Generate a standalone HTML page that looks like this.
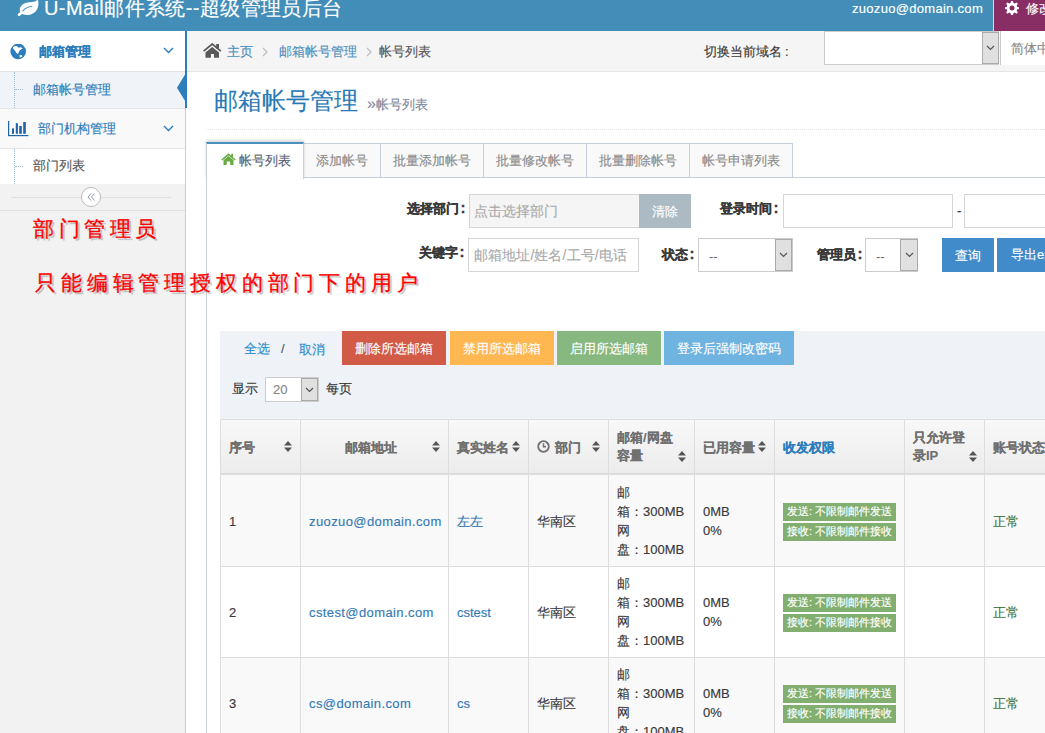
<!DOCTYPE html>
<html><head><meta charset="utf-8">
<style>
*{box-sizing:border-box}
html,body{margin:0;padding:0}
body{width:1045px;height:733px;overflow:hidden;position:relative;background:#fff;font-family:"Liberation Sans",sans-serif;font-size:13px;color:#393939;-webkit-text-stroke:0.15px currentColor}
.a{position:absolute;white-space:nowrap}
.b{-webkit-text-stroke:0.25px currentColor}
/* header */
#hdr{left:0;top:0;width:1045px;height:31px;background:#438eb9}
#brand{left:44px;top:-4px;font-size:20px;color:#fff;line-height:24px;letter-spacing:0.4px}
#user{left:852px;top:0px;color:#fff;line-height:18px;letter-spacing:0.3px}
#purple{left:993px;top:0;width:52px;height:31px;background:#892e65;border-left:1px solid #dcdcdc}
/* sidebar */
#sb{left:0;top:31px;width:186px;height:702px;background:#f2f2f2;border-right:1px solid #ccc}
.row{left:0;width:185px;border-top:1px solid #e5e5e5}
.chev{width:10px;height:6px}
</style></head><body>

<div id="hdr" class="a"></div>
<svg class="a" style="left:14px;top:0" width="30" height="20" viewBox="0 0 30 20"><path d="M6.5 13.5 C5.2 11 5.5 8 7.5 5.5 C10 2.8 14 2.2 18 2 C20.5 1.9 22.5 1 23.8 -0.5 C24.8 2 24.6 6 23.2 9 C21.2 13 17 15 13 15 C10.5 15 8.5 14.3 7 13.6 Z" fill="#fff"/><path d="M7.2 13 L5 14.8" stroke="#fff" stroke-width="2.6" stroke-linecap="round"/><path d="M8.8 11 Q12 7.2 17.8 6.3" fill="none" stroke="#438eb9" stroke-width="1.1" stroke-linecap="round"/></svg>
<div id="brand" class="a">U-Mail邮件系统--超级管理员后台</div>
<div id="user" class="a">zuozuo@domain.com</div>
<div id="purple" class="a"></div>
<svg class="a" style="left:1005px;top:1px" width="14" height="14" viewBox="0 0 14 14"><path fill="#fff" fill-rule="evenodd" d="M6 0 H8 L8.4 2 L9.8 2.6 L11.5 1.4 L12.9 2.8 L11.7 4.5 L12.3 5.9 L14 6.2 V8 L12.3 8.3 L11.7 9.7 L12.9 11.4 L11.5 12.8 L9.8 11.6 L8.4 12.2 L8 14 H6 L5.6 12.2 L4.2 11.6 L2.5 12.8 L1.1 11.4 L2.3 9.7 L1.7 8.3 L0 8 V6.2 L1.7 5.9 L2.3 4.5 L1.1 2.8 L2.5 1.4 L4.2 2.6 L5.6 2 Z M7 4.6 A2.5 2.5 0 1 0 7 9.6 A2.5 2.5 0 1 0 7 4.6 Z"/></svg>
<div class="a" style="left:1026px;top:0px;color:#fff;line-height:18px">修改密码</div>

<div id="sb" class="a"></div>
<!-- item1 -->
<div class="a" style="left:0;top:31px;width:185px;height:40px;background:#fff"></div>
<svg class="a" style="left:10px;top:44px" width="18" height="18" viewBox="0 0 18 18"><circle cx="8.2" cy="7.4" r="7.8" fill="#2b7dbc"/><path d="M3.05 2.9 L5 2 L7.4 2.15 L7.7 3.2 L9.2 3.8 L10.4 3 L12.8 4.4 L11 5.6 L9.8 6.2 L8.9 8 L8 10.1 L6.5 8.9 L5 6.8 L3.2 4.7 Z M9.2 11.6 L11.6 11 L12.5 12.2 L10.1 13.7 Z" fill="#fff"/></svg>
<div class="a" style="left:39px;top:43px;line-height:18px;font-weight:bold;color:#2b7dbc">邮箱管理</div>
<svg class="a" style="left:163px;top:47px" width="11" height="7" viewBox="0 0 11 7"><path d="M1 1 L5.5 5.5 L10 1" fill="none" stroke="#2b7dbc" stroke-width="1.35"/></svg>
<!-- sub1 -->
<div class="a" style="left:0;top:71px;width:185px;height:37px;background:#f0f4f8;border-top:1px solid #e5e5e5"></div>
<div class="a" style="left:14px;top:72px;width:0;height:36px;border-left:1px dotted #9dbdd6"></div>
<div class="a" style="left:15px;top:89px;width:8px;height:0;border-top:1px dotted #9dbdd6"></div>
<div class="a" style="left:33px;top:81px;line-height:18px;color:#2b7dbc">邮箱帐号管理</div>
<div class="a" style="left:185px;top:31px;width:2px;height:77px;background:#2b7dbc"></div>
<svg class="a" style="left:176px;top:73px" width="10" height="30" viewBox="0 0 10 30"><path d="M10 0 L10 29.5 L1 14.75 Z" fill="#2b7dbc"/></svg>
<!-- item2 -->
<div class="a" style="left:0;top:108px;width:185px;height:40px;background:#f9f9f9;border-top:1px solid #e5e5e5"></div>
<svg class="a" style="left:4px;top:116px" width="30" height="24" viewBox="0 0 30 24"><rect x="4" y="5" width="1.2" height="15" fill="#1e63ab"/><rect x="4" y="19" width="20.5" height="1.2" fill="#1e63ab"/><rect x="8" y="12.4" width="2" height="5.4" fill="#1e63ab"/><rect x="11.8" y="7.2" width="2.1" height="10.6" fill="#1e63ab"/><rect x="15.2" y="10" width="2.6" height="7.8" fill="#1e63ab"/><rect x="19.2" y="6" width="2.6" height="11.8" fill="#1e63ab"/></svg>
<div class="a" style="left:38px;top:120px;line-height:18px;color:#2b7dbc">部门机构管理</div>
<svg class="a" style="left:163px;top:125px" width="11" height="7" viewBox="0 0 11 7"><path d="M1 1 L5.5 5.5 L10 1" fill="none" stroke="#2b7dbc" stroke-width="1.35"/></svg>
<!-- sub2 -->
<div class="a" style="left:0;top:148px;width:185px;height:36px;background:#fff;border-top:1px solid #e5e5e5"></div>
<div class="a" style="left:14px;top:149px;width:0;height:35px;border-left:1px dotted #9dbdd6"></div>
<div class="a" style="left:15px;top:166px;width:8px;height:0;border-top:1px dotted #9dbdd6"></div>
<div class="a" style="left:33px;top:157px;line-height:18px;color:#585858">部门列表</div>
<!-- collapse -->
<div class="a" style="left:0;top:184px;width:185px;height:27px;background:#f2f2f2;border-bottom:1px solid #e0e0e0"></div>
<div class="a" style="left:11px;top:197px;width:160px;height:0;border-top:1px solid #e0e0e0"></div>
<div class="a" style="left:81px;top:187px;width:20px;height:20px;border-radius:50%;background:#fff;border:1px solid #bbb"></div><svg class="a" style="left:86px;top:192px" width="10" height="10" viewBox="0 0 10 10"><path d="M5 1.5 L2 5 L5 8.5 M8.5 1.5 L5.5 5 L8.5 8.5" fill="none" stroke="#8c9db0" stroke-width="1"/></svg>
<!-- annotation -->
<div class="a" style="left:33px;top:215px;font-size:21px;line-height:28px;color:#f00;letter-spacing:4.6px;font-weight:normal;-webkit-text-stroke:0.3px #f00;text-shadow:2px 2px 1px rgba(0,0,0,.25)">部门管理员</div>
<div class="a" style="left:35px;top:269px;font-size:21px;line-height:28px;color:#f00;letter-spacing:4.85px;font-weight:normal;-webkit-text-stroke:0.3px #f00;text-shadow:2px 2px 1px rgba(0,0,0,.25);z-index:5">只能编辑管理授权的部门下的用户</div>

<!-- breadcrumbs -->
<div class="a" style="left:187px;top:31px;width:858px;height:41px;background:#f5f5f5;border-bottom:1px solid #e5e5e5"></div>
<svg class="a" style="left:203px;top:43px" width="19" height="16" viewBox="0 0 19 16"><path d="M0.6 8.2 L9.2 1 L17.9 8.2" fill="none" stroke="#585858" stroke-width="1.7"/><path d="M2.5 9.6 L9.2 4 L16 9.6 V14.8 H11 V11 H7.9 V14.8 H2.5 Z" fill="#585858"/><rect x="13.2" y="1" width="2.8" height="4.4" fill="#585858"/></svg>
<div class="a" style="left:227px;top:43px;line-height:18px;color:#4c8fbd">主页</div>
<svg class="a" style="left:262px;top:47px" width="6" height="10" viewBox="0 0 6 10"><path d="M1 1 L5 5 L1 9" fill="none" stroke="#bbb" stroke-width="1.2"/></svg>
<div class="a" style="left:279px;top:43px;line-height:18px;color:#4c8fbd">邮箱帐号管理</div>
<svg class="a" style="left:366px;top:47px" width="6" height="10" viewBox="0 0 6 10"><path d="M1 1 L5 5 L1 9" fill="none" stroke="#bbb" stroke-width="1.2"/></svg>
<div class="a" style="left:379px;top:43px;line-height:18px;color:#555">帐号列表</div>
<div class="a" style="left:704px;top:43px;line-height:18px;color:#393939">切换当前域名<span style="padding-left:3px">:</span></div>
<div class="a" style="left:824px;top:31px;width:175px;height:34px;background:#fff;border:1px solid #ccc"></div>
<div class="a" style="left:982px;top:32px;width:17px;height:32px;background:#e0e0e0;border:1px solid #aaa"></div>
<svg class="a" style="left:986px;top:45px" width="9" height="6" viewBox="0 0 9 6"><path d="M1 1 L4.5 4.5 L8 1" fill="none" stroke="#555" stroke-width="1.2"/></svg>
<div class="a" style="left:1000px;top:31px;width:45px;height:34px;background:#fff;border-left:1px solid #ccc"></div>
<div class="a" style="left:1011px;top:40px;line-height:18px;color:#888;font-size:13px">简体中文</div>
<!-- page header -->
<div class="a" style="left:214px;top:86px;font-size:24px;line-height:30px;color:#2679b5">邮箱帐号管理</div>
<div class="a" style="left:367px;top:96px;font-size:13px;line-height:18px;color:#8089a0"><span style="font-size:16px;line-height:14px">&raquo;</span>帐号列表</div>
<div class="a" style="left:206px;top:129px;width:839px;height:0;border-top:1px dotted #e2e2e2"></div>
<!-- tabs -->
<div class="a" style="left:206px;top:177px;width:839px;height:556px;border-left:1px solid #c5d0dc;border-top:1px solid #c5d0dc"></div>
<div class="a" style="left:303px;top:143px;width:78px;height:35px;background:#f9f9f9;border:1px solid #c5d0dc"></div>
<div class="a" style="left:380px;top:143px;width:104px;height:35px;background:#f9f9f9;border:1px solid #c5d0dc"></div>
<div class="a" style="left:483px;top:143px;width:104px;height:35px;background:#f9f9f9;border:1px solid #c5d0dc"></div>
<div class="a" style="left:586px;top:143px;width:104px;height:35px;background:#f9f9f9;border:1px solid #c5d0dc"></div>
<div class="a" style="left:689px;top:143px;width:104px;height:35px;background:#f9f9f9;border:1px solid #c5d0dc"></div>
<div class="a" style="left:206px;top:142px;width:98px;height:37px;background:#fff;border-left:1px solid #c5d0dc;border-right:1px solid #c5d0dc;border-top:2px solid #4c8fbd;box-shadow:0 -2px 3px 0 rgba(0,0,0,.15)"></div>
<div class="a" style="left:207px;top:177px;width:96px;height:3px;background:#fff"></div>
<svg class="a" style="left:221px;top:153px" width="15" height="12" viewBox="0 0 15 12"><path d="M7.5 0.3 L0.3 6.5 L1.4 7.6 L7.5 2.4 L13.6 7.6 L14.7 6.5 L12 4.2 V0.8 H10.3 V2.7 Z" fill="#69aa46"/><path d="M2.5 7.2 L7.5 3.1 L12.5 7.2 V12 H9.2 V8.5 H5.8 V12 H2.5 Z" fill="#69aa46"/></svg>
<div class="a" style="left:239px;top:152px;line-height:18px;color:#576373">帐号列表</div>
<div class="a" style="left:316px;top:152px;line-height:18px;color:#8c8c8c">添加帐号</div>
<div class="a" style="left:393px;top:152px;line-height:18px;color:#8c8c8c">批量添加帐号</div>
<div class="a" style="left:496px;top:152px;line-height:18px;color:#8c8c8c">批量修改帐号</div>
<div class="a" style="left:599px;top:152px;line-height:18px;color:#8c8c8c">批量删除帐号</div>
<div class="a" style="left:702px;top:152px;line-height:18px;color:#8c8c8c">帐号申请列表</div>
<!-- form -->
<div class="a" style="left:407px;top:200px;line-height:18px;font-weight:bold;color:#393939;-webkit-text-stroke:0.3px #393939">选择部门<span style="padding:0 0 0 1.5px;font-size:15px;line-height:10px">:</span></div>
<div class="a" style="left:469px;top:194px;width:171px;height:34px;background:#f5f5f5;border:1px solid #d5d5d5"></div>
<div class="a" style="left:474px;top:202px;line-height:18px;color:#aaa;font-size:14px">点击选择部门</div>
<div class="a" style="left:639px;top:194px;width:52px;height:34px;background:#abbac3;color:#fff;text-align:center;line-height:36px">清除</div>
<div class="a" style="left:720px;top:200px;line-height:18px;font-weight:bold;color:#393939;-webkit-text-stroke:0.3px #393939">登录时间<span style="padding:0 0 0 1.5px;font-size:15px;line-height:10px">:</span></div>
<div class="a" style="left:783px;top:194px;width:170px;height:34px;background:#fff;border:1px solid #d5d5d5"></div>
<div class="a" style="left:957px;top:202px;line-height:18px;color:#393939">-</div>
<div class="a" style="left:964px;top:194px;width:100px;height:34px;background:#fff;border:1px solid #d5d5d5"></div>
<div class="a" style="left:419px;top:244px;line-height:18px;font-weight:bold;color:#393939;-webkit-text-stroke:0.3px #393939">关键字<span style="padding:0 0 0 1.5px;font-size:15px;line-height:10px">:</span></div>
<div class="a" style="left:468px;top:238px;width:171px;height:34px;background:#fff;border:1px solid #d5d5d5"></div>
<div class="a" style="left:474px;top:246px;line-height:18px;color:#aaa;font-size:14px;letter-spacing:0.1px">邮箱地址/姓名/工号/电话</div>
<div class="a" style="left:662px;top:246px;line-height:18px;font-weight:bold;color:#393939;-webkit-text-stroke:0.3px #393939">状态<span style="padding:0 0 0 1.5px;font-size:15px;line-height:10px">:</span></div>
<div class="a" style="left:698px;top:238px;width:95px;height:34px;background:#fff;border:1px solid #ccc"></div>
<div class="a" style="left:775px;top:239px;width:17px;height:32px;background:#e0e0e0;border:1px solid #aaa"></div>
<svg class="a" style="left:779px;top:252px" width="9" height="6" viewBox="0 0 9 6"><path d="M1 1 L4.5 4.5 L8 1" fill="none" stroke="#555" stroke-width="1.2"/></svg>
<div class="a" style="left:709px;top:248px;line-height:18px;color:#666;-webkit-text-stroke:0">--</div>
<div class="a" style="left:817px;top:246px;line-height:18px;font-weight:bold;color:#393939;-webkit-text-stroke:0.3px #393939">管理员<span style="padding:0 0 0 1.5px;font-size:15px;line-height:10px">:</span></div>
<div class="a" style="left:865px;top:238px;width:53px;height:34px;background:#fff;border:1px solid #ccc"></div>
<div class="a" style="left:900px;top:239px;width:18px;height:32px;background:#e0e0e0;border:1px solid #aaa"></div>
<svg class="a" style="left:905px;top:252px" width="9" height="6" viewBox="0 0 9 6"><path d="M1 1 L4.5 4.5 L8 1" fill="none" stroke="#555" stroke-width="1.2"/></svg>
<div class="a" style="left:876px;top:248px;line-height:18px;color:#666;-webkit-text-stroke:0">--</div>
<div class="a" style="left:942px;top:238px;width:52px;height:34px;background:#428bca;color:#fff;text-align:center;line-height:36px">查询</div>
<div class="a" style="left:997px;top:238px;width:80px;height:34px;background:#428bca;color:#fff;line-height:34px;padding-left:14px">导出excel</div>
<!-- batch -->
<div class="a" style="left:220px;top:331px;width:825px;height:88px;background:#eff3f8"></div>
<div class="a" style="left:244px;top:340px;line-height:18px;color:#2a8bcc">全选</div>
<div class="a" style="left:281px;top:340px;line-height:18px;color:#555">/</div>
<div class="a" style="left:299px;top:341px;line-height:18px;color:#2a8bcc">取消</div>
<div class="a" style="left:342px;top:331px;width:104px;height:34px;background:#d15b47;color:#fff;text-align:center;line-height:36px">删除所选邮箱</div>
<div class="a" style="left:450px;top:331px;width:104px;height:34px;background:#ffb752;color:#fff;text-align:center;line-height:36px">禁用所选邮箱</div>
<div class="a" style="left:557px;top:331px;width:104px;height:34px;background:#87b87f;color:#fff;text-align:center;line-height:36px">启用所选邮箱</div>
<div class="a" style="left:664px;top:331px;width:130px;height:34px;background:#6fb3e0;color:#fff;text-align:center;line-height:36px">登录后强制改密码</div>
<div class="a" style="left:232px;top:380px;line-height:18px;color:#393939">显示</div>
<div class="a" style="left:265px;top:377px;width:54px;height:25px;background:#fff;border:1px solid #ccc"></div>
<div class="a" style="left:301px;top:378px;width:17px;height:23px;background:#e0e0e0;border:1px solid #aaa"></div>
<svg class="a" style="left:305px;top:387px" width="9" height="6" viewBox="0 0 9 6"><path d="M1 1 L4.5 4.5 L8 1" fill="none" stroke="#555" stroke-width="1.2"/></svg>
<div class="a" style="left:273px;top:381px;line-height:18px;color:#888">20</div>
<div class="a" style="left:326px;top:380px;line-height:18px;color:#393939">每页</div>

<!-- table -->
<div class="a" style="left:220px;top:419px;width:825px;height:56px;background:linear-gradient(#f8f8f8,#ececec);border-top:1px solid #ddd;border-bottom:2px solid #ddd"></div>
<div class="a" style="left:220px;top:475px;width:825px;height:91px;background:#f9f9f9"></div>
<div class="a" style="left:220px;top:566px;width:825px;height:1px;background:#ddd"></div>
<div class="a" style="left:220px;top:567px;width:825px;height:90px;background:#fff"></div>
<div class="a" style="left:220px;top:657px;width:825px;height:1px;background:#ddd"></div>
<div class="a" style="left:220px;top:658px;width:825px;height:75px;background:#f9f9f9"></div>
<div class="a" style="left:220px;top:419px;width:1px;height:314px;background:#ddd"></div>
<div class="a" style="left:300px;top:419px;width:1px;height:314px;background:#ddd"></div>
<div class="a" style="left:448px;top:419px;width:1px;height:314px;background:#ddd"></div>
<div class="a" style="left:528px;top:419px;width:1px;height:314px;background:#ddd"></div>
<div class="a" style="left:608px;top:419px;width:1px;height:314px;background:#ddd"></div>
<div class="a" style="left:694px;top:419px;width:1px;height:314px;background:#ddd"></div>
<div class="a" style="left:774px;top:419px;width:1px;height:314px;background:#ddd"></div>
<div class="a" style="left:904px;top:419px;width:1px;height:314px;background:#ddd"></div>
<div class="a" style="left:984px;top:419px;width:1px;height:314px;background:#ddd"></div>
<div class="a" style="left:229px;top:438px;line-height:19px;font-weight:bold;color:#707070">序号</div>
<svg class="a" style="left:284px;top:441px" width="8" height="11" viewBox="0 0 8 11"><path d="M4 0 L8 4.6 H0 Z M0 6.4 H8 L4 11 Z" fill="#555"/></svg>
<div class="a" style="left:345px;top:438px;line-height:19px;font-weight:bold;color:#707070">邮箱地址</div>
<svg class="a" style="left:432px;top:441px" width="8" height="11" viewBox="0 0 8 11"><path d="M4 0 L8 4.6 H0 Z M0 6.4 H8 L4 11 Z" fill="#555"/></svg>
<div class="a" style="left:457px;top:438px;line-height:19px;font-weight:bold;color:#707070">真实姓名</div>
<svg class="a" style="left:512px;top:441px" width="8" height="11" viewBox="0 0 8 11"><path d="M4 0 L8 4.6 H0 Z M0 6.4 H8 L4 11 Z" fill="#555"/></svg>
<svg class="a" style="left:537px;top:440px" width="13" height="13" viewBox="0 0 13 13"><circle cx="6.5" cy="6.5" r="5.3" fill="none" stroke="#707070" stroke-width="1.8"/><path d="M6.5 3.2 V6.8 H9" fill="none" stroke="#707070" stroke-width="1.5"/></svg>
<div class="a" style="left:555px;top:438px;line-height:19px;font-weight:bold;color:#707070">部门</div>
<svg class="a" style="left:592px;top:441px" width="8" height="11" viewBox="0 0 8 11"><path d="M4 0 L8 4.6 H0 Z M0 6.4 H8 L4 11 Z" fill="#555"/></svg>
<div class="a" style="left:617px;top:429px;line-height:18px;font-weight:bold;color:#707070">邮箱/网盘<br>容量</div>
<svg class="a" style="left:678px;top:451px" width="8" height="11" viewBox="0 0 8 11"><path d="M4 0 L8 4.6 H0 Z M0 6.4 H8 L4 11 Z" fill="#555"/></svg>
<div class="a" style="left:703px;top:438px;line-height:19px;font-weight:bold;color:#707070">已用容量</div>
<svg class="a" style="left:758px;top:441px" width="8" height="11" viewBox="0 0 8 11"><path d="M4 0 L8 4.6 H0 Z M0 6.4 H8 L4 11 Z" fill="#555"/></svg>
<div class="a" style="left:783px;top:438px;line-height:19px;font-weight:bold;color:#2b7dbc">收发权限</div>
<div class="a" style="left:913px;top:429px;line-height:18px;font-weight:bold;color:#707070">只允许登<br>录IP</div>
<svg class="a" style="left:969px;top:451px" width="8" height="11" viewBox="0 0 8 11"><path d="M4 0 L8 4.6 H0 Z M0 6.4 H8 L4 11 Z" fill="#555"/></svg>
<div class="a" style="left:993px;top:438px;line-height:19px;font-weight:bold;color:#707070">账号状态</div>
<div class="a" style="left:229px;top:512px;line-height:19px;color:#393939">1</div>
<div class="a" style="left:309px;top:512px;line-height:19px;color:#337ab7;letter-spacing:0.4px">zuozuo@domain.com</div>
<div class="a" style="left:457px;top:512px;line-height:19px;color:#337ab7">左左</div>
<div class="a" style="left:537px;top:512px;line-height:19px;color:#393939">华南区</div>
<div class="a" style="left:617px;top:483px;line-height:19px;color:#393939">邮<br>箱：300MB<br>网<br>盘：100MB</div>
<div class="a" style="left:703px;top:502px;line-height:19px;color:#393939">0MB<br>0%</div>
<div class="a" style="left:783px;top:503px;width:113px;height:18px;background:#82af6f;color:#fff;font-size:11px;line-height:16px;padding-left:4px">发送: 不限制邮件发送</div>
<div class="a" style="left:783px;top:523px;width:113px;height:18px;background:#82af6f;color:#fff;font-size:11px;line-height:16px;padding-left:4px">接收: 不限制邮件接收</div>
<div class="a" style="left:993px;top:512px;line-height:19px;color:#3c763d">正常</div>
<div class="a" style="left:229px;top:603px;line-height:19px;color:#393939">2</div>
<div class="a" style="left:309px;top:603px;line-height:19px;color:#337ab7;letter-spacing:0.4px">cstest@domain.com</div>
<div class="a" style="left:457px;top:603px;line-height:19px;color:#337ab7">cstest</div>
<div class="a" style="left:537px;top:603px;line-height:19px;color:#393939">华南区</div>
<div class="a" style="left:617px;top:574px;line-height:19px;color:#393939">邮<br>箱：300MB<br>网<br>盘：100MB</div>
<div class="a" style="left:703px;top:593px;line-height:19px;color:#393939">0MB<br>0%</div>
<div class="a" style="left:783px;top:594px;width:113px;height:18px;background:#82af6f;color:#fff;font-size:11px;line-height:16px;padding-left:4px">发送: 不限制邮件发送</div>
<div class="a" style="left:783px;top:614px;width:113px;height:18px;background:#82af6f;color:#fff;font-size:11px;line-height:16px;padding-left:4px">接收: 不限制邮件接收</div>
<div class="a" style="left:993px;top:603px;line-height:19px;color:#3c763d">正常</div>
<div class="a" style="left:229px;top:694px;line-height:19px;color:#393939">3</div>
<div class="a" style="left:309px;top:694px;line-height:19px;color:#337ab7;letter-spacing:0.4px">cs@domain.com</div>
<div class="a" style="left:457px;top:694px;line-height:19px;color:#337ab7">cs</div>
<div class="a" style="left:537px;top:694px;line-height:19px;color:#393939">华南区</div>
<div class="a" style="left:617px;top:665px;line-height:19px;color:#393939">邮<br>箱：300MB<br>网<br>盘：100MB</div>
<div class="a" style="left:703px;top:684px;line-height:19px;color:#393939">0MB<br>0%</div>
<div class="a" style="left:783px;top:685px;width:113px;height:18px;background:#82af6f;color:#fff;font-size:11px;line-height:16px;padding-left:4px">发送: 不限制邮件发送</div>
<div class="a" style="left:783px;top:705px;width:113px;height:18px;background:#82af6f;color:#fff;font-size:11px;line-height:16px;padding-left:4px">接收: 不限制邮件接收</div>
<div class="a" style="left:993px;top:694px;line-height:19px;color:#3c763d">正常</div>
</body></html>
